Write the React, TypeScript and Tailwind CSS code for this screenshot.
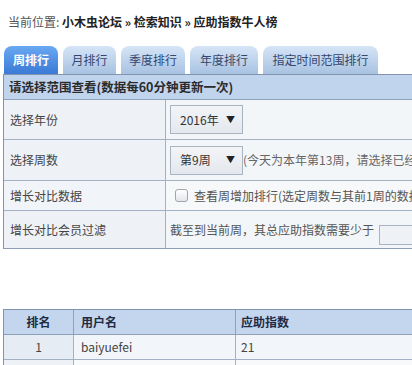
import React from "react";

const font = { fontFamily: '"Noto Sans CJK SC", "Microsoft YaHei", sans-serif' };

function Tab({ label, active, w }: { label: string; active?: boolean; w: number }) {
  return (
    <div
      style={{ width: w }}
      className={
        "h-[28px] flex items-center justify-center rounded-t-[8px] text-[12px] leading-none " +
        (active
          ? "bg-gradient-to-b from-[#6aa8f2] to-[#3b7ad6] text-white font-bold"
          : "bg-gradient-to-b from-[#d6e5f7] to-[#a8c2e2] text-[#34486e]")
      }
    >
      {label}
    </div>
  );
}

function Select({ text }: { text: string }) {
  return (
    <div className="w-[73px] h-[29px] border border-[#a9b3c1] bg-gradient-to-b from-[#f2f4f7] to-[#e4e8ee] flex items-center justify-between pl-[9px] pr-[7px] text-[12px] text-[#333]">
      <span>{text}</span>
      <span className="text-[9px] text-[#222]">▼</span>
    </div>
  );
}

export default function App() {
  return (
    <div className="w-[412px] h-[365px] overflow-hidden bg-white text-[#333]" style={font}>
      <div className="pt-[14px] pl-[8px] text-[12px] leading-[16px] whitespace-nowrap">
        <span className="text-[#555]">当前位置: </span>
        <span className="font-bold text-[#222]">小木虫论坛 » 检索知识 » 应助指数牛人榜</span>
      </div>

      <div className="mt-[16px] ml-[4px] flex gap-[5px]">
        <Tab label="周排行" active w={54} />
        <Tab label="月排行" w={53} />
        <Tab label="季度排行" w={64} />
        <Tab label="年度排行" w={68} />
        <Tab label="指定时间范围排行" w={115} />
      </div>

      <div className="ml-[3px] w-[620px] border-l border-t border-[#8395ae] text-[12px] whitespace-nowrap">
        <div className="h-[25px] bg-[#c1d4ed] border-b border-[#8fa1b9] flex items-center pl-[5px] font-bold text-[12.5px] text-[#2b2b2b]">
          请选择范围查看(数据每60分钟更新一次)
        </div>
        <div className="flex h-[40px] border-b border-[#a3b1c4]">
          <div className="w-[162px] bg-[#eef2f7] border-r border-[#a3b1c4] flex items-center pl-[6px] text-[#444]">选择年份</div>
          <div className="flex-1 bg-[#f3f6f9] flex items-center pl-[4px]">
            <Select text="2016年" />
          </div>
        </div>
        <div className="flex h-[41px] border-b border-[#a3b1c4]">
          <div className="w-[162px] bg-[#eef2f7] border-r border-[#a3b1c4] flex items-center pl-[6px] text-[#444]">选择周数</div>
          <div className="flex-1 bg-[#f3f6f9] flex items-center pl-[4px] text-[#666]">
            <Select text="第9周" />
            <span>(今天为本年第13周，请选择已经结束的周数)</span>
          </div>
        </div>
        <div className="flex h-[30px] border-b border-[#a3b1c4]">
          <div className="w-[162px] bg-[#f1f4f8] border-r border-[#a3b1c4] flex items-center pl-[6px] text-[#444]">增长对比数据</div>
          <div className="flex-1 bg-[#f6f8fa] flex items-center pl-[9px] text-[#555]">
            <span className="w-[13px] h-[13px] rounded-[3px] border border-[#a0a6ad] bg-gradient-to-b from-white to-[#e3e6ea]" />
            <span className="ml-[6px]">查看周增加排行(选定周数与其前1周的数据对比)</span>
          </div>
        </div>
        <div className="flex h-[38px] border-b border-[#8d9fb7]">
          <div className="w-[162px] bg-[#eef2f7] border-r border-[#a3b1c4] flex items-center pl-[6px] text-[#444]">增长对比会员过滤</div>
          <div className="flex-1 bg-[#f3f6f9] flex items-center pl-[4px] text-[#555]">
            <span>截至到当前周，其总应助指数需要少于</span>
            <span className="ml-[5px] mt-[10px] w-[80px] h-[20px] border border-[#a9b3c1] bg-[#eef1f5]" />
          </div>
        </div>
      </div>

      <div className="mt-[60px] ml-[3px] w-[620px] border-l border-t border-[#8395ae] text-[12px] whitespace-nowrap">
        <div className="flex h-[25px] bg-[#c3d6ee] border-b border-[#8fa1b9] font-bold text-[#1f2b45]">
          <div className="w-[70px] border-r border-[#8fa1b9] flex items-center justify-center">排名</div>
          <div className="w-[162px] border-r border-[#8fa1b9] flex items-center pl-[7px]">用户名</div>
          <div className="flex-1 flex items-center pl-[5px]">应助指数</div>
        </div>
        <div className="flex h-[25px] border-b border-[#a3b1c4] text-[#444]">
          <div className="w-[70px] bg-[#e6ecf4] border-r border-[#a3b1c4] flex items-center justify-center">1</div>
          <div className="w-[162px] bg-[#f2f5f9] border-r border-[#a3b1c4] flex items-center pl-[7px]">baiyuefei</div>
          <div className="flex-1 bg-[#f2f5f9] flex items-center pl-[5px]">21</div>
        </div>
        <div className="flex h-[25px] text-[#444]">
          <div className="w-[70px] bg-[#eef2f7] border-r border-[#a3b1c4]" />
          <div className="w-[162px] bg-[#f7f9fb] border-r border-[#a3b1c4]" />
          <div className="flex-1 bg-[#f7f9fb]" />
        </div>
      </div>
    </div>
  );
}
